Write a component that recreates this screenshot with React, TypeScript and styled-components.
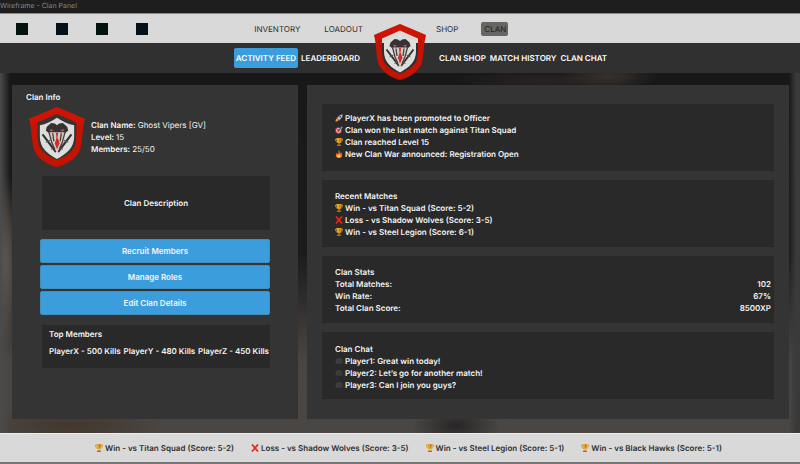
import React from "react";
import styled, { createGlobalStyle } from "styled-components";

const GlobalStyle = createGlobalStyle`
  *, *::before, *::after { box-sizing: border-box; }
  body { margin: 0; background: #1e1e1e; }
  button, a, table { font: inherit; color: inherit; }
  h2, p, ul { margin: 0; padding: 0; font: inherit; }
  ul { list-style: none; }
`;

const Page = styled.div`
  min-height: 100vh;
  display: flex;
  flex-direction: column;
  font-family: Inter, sans-serif;
  font-size: 8px;
  line-height: 12px;
  font-weight: 600;
  text-rendering: geometricPrecision;
  color: #f4f4f4;
`;

const TitleBar = styled.div`
  height: 13px;
  background: #1e1e1e;
  color: #858585;
  font-weight: 400;
  font-size: 7px;
  line-height: 11px;
`;

const Header = styled.header`
  position: relative;
`;

const NavRow = styled.div<{ $tone: "light" | "dark" }>`
  display: grid;
  grid-template-columns: minmax(0, 1fr) 72px minmax(0, 1fr);
  align-items: center;
  height: 30px;
  background: ${(p) => (p.$tone === "light" ? "#d9d9d9" : "#303030")};
  color: ${(p) => (p.$tone === "light" ? "#2b2b2b" : "#fff")};
  font-weight: ${(p) => (p.$tone === "light" ? 400 : 600)};
  border-top: ${(p) => (p.$tone === "light" ? "1px solid #8a8a8a" : "0")};
`;

const StartSide = styled.div<{ $spread?: boolean }>`
  display: flex;
  align-items: center;
  justify-content: ${(p) => (p.$spread ? "space-between" : "flex-end")};
  padding: 0 ${(p) => (p.$spread ? 1 : 4)}px 0 16px;
`;

const EndSide = styled.nav<{ $gap: number; $inset: number }>`
  grid-column: 3;
  display: flex;
  align-items: center;
  gap: ${(p) => p.$gap}px;
  padding-left: ${(p) => p.$inset}px;
`;

const LinkGroup = styled.nav<{ $gap: number }>`
  display: flex;
  align-items: center;
  gap: ${(p) => p.$gap}px;
`;

const SquareGroup = styled.div`
  display: flex;
  gap: 28px;
`;

const Square = styled.button<{ $color: string }>`
  width: 12px;
  height: 12px;
  padding: 0;
  border: 0;
  background: ${(p) => p.$color};
`;

const NavLink = styled.a`
  color: inherit;
  text-decoration: none;
  white-space: nowrap;
`;

const CurrentLink = styled(NavLink)`
  padding: 1px 2px 1px 3px;
  border-radius: 2px;
  background: #666;
  color: #222;
`;

const TabLink = styled(NavLink)<{ $active?: boolean }>`
  padding: ${(p) => (p.$active ? "4px 2px" : "0")};
  border-radius: 2px;
  background: ${(p) => (p.$active ? "#3b9ddb" : "transparent")};
`;

const HeaderCrest = styled.div`
  position: absolute;
  top: 11px;
  left: 50%;
  width: 52px;
  height: 56px;
  margin-left: -26px;
  svg { display: block; width: 100%; height: 100%; }
`;

const Main = styled.main`
  flex: 1;
  display: grid;
  grid-template-columns: minmax(0, 286fr) minmax(0, 482fr);
  gap: 9px;
  padding: 12px 11px 14px 12px;
  background:
    radial-gradient(ellipse 50px 14px at 76% 1%, #37322e, transparent),
    radial-gradient(ellipse 90px 10px at 68% 2%, #2c2222, transparent),
    linear-gradient(90deg, #4b4b4b 0, transparent 10px, transparent 789px, #3a3a3a 796px),
    radial-gradient(ellipse 24px 90px at 0 52%, #79695d, transparent),
    radial-gradient(ellipse 90px 22px at 9% 98%, #42372c, transparent),
    radial-gradient(ellipse 44px 20px at 57% 98%, #272525, transparent),
    linear-gradient(180deg, #181818 0, #1c1b1b 50%, #494542 80%, #494643 100%);
`;

const Panel = styled.section<{ $inset: string }>`
  background: #343434;
  padding: ${(p) => p.$inset};
`;

const Identity = styled.div`
  display: flex;
  align-items: center;
  gap: 6px;
  margin: 4px 0 9px 3px;
  svg { flex: none; width: 56px; height: 60px; }
`;

const Plain = styled.span`
  font-weight: 400;
`;

const Actions = styled.div`
  display: grid;
  gap: 2px;
  margin: 9px 0 10px 14px;
`;

const ActionButton = styled.button`
  height: 24px;
  padding: 0;
  border: 1px solid #438fbc;
  border-radius: 2px;
  background: #3b9ddb;
  color: #f4f4f4;
  text-align: center;
`;

const Description = styled.div`
  display: grid;
  place-items: center;
  min-height: 54px;
  margin-left: 16px;
  background: #292929;
`;

const TopMembers = styled.div`
  min-height: 43px;
  margin-left: 16px;
  padding: 3px 1px 10px 7px;
  background: #292929;
`;

const Kills = styled.ul`
  display: flex;
  justify-content: space-between;
  margin-top: 5px;
  white-space: nowrap;
`;

const Feed = styled.div`
  display: grid;
  gap: 9px;
`;

const Card = styled.div<{ $top?: number }>`
  min-height: 67px;
  padding: ${(p) => p.$top ?? 10}px 3px 8px 13px;
  background: #292929;
`;

const Entry = styled.li`
  display: flex;
  align-items: center;
  gap: 2px;
  white-space: nowrap;
  svg { flex: none; width: 8px; height: 8px; }
`;

const StatsTable = styled.table`
  width: 100%;
  border-collapse: collapse;
  caption { text-align: left; }
  th { padding: 0; text-align: left; font-weight: inherit; }
  td { padding: 0; text-align: right; }
`;

const Footer = styled.footer`
  height: 31px;
  background: #d9d9d9;
  border-top: 1px solid #eee;
  border-bottom: 2px solid #777;
  color: #303030;
`;

const Results = styled.ul`
  display: flex;
  align-items: center;
  gap: 17px;
  height: 100%;
  padding-left: 95px;
`;

type IconKind = "rocket" | "target" | "trophy" | "fire" | "cross" | "bubble";

function Icon({ kind }: { kind: IconKind }) {
  return (
    <svg viewBox="0 0 16 16" aria-hidden="true">
      {kind === "rocket" && (
        <>
          <path d="M1 15c0-4 1-6 4-6l2 2c0 3-2 4-6 4z" fill="#f39b32" />
          <path d="M2 8l4-3 3 1-4 5zM8 14l3-4-1-4-4 5z" fill="#d73b2c" />
          <path d="M15 1c-5 0-9 4-10 8l3 3c4-2 8-6 7-11z" fill="#bdc7cb" />
          <circle cx="10.5" cy="5.5" r="1.8" fill="#31586c" />
        </>
      )}
      {kind === "target" && (
        <>
          <circle cx="7" cy="9" r="6.5" fill="#d7354c" />
          <circle cx="7" cy="9" r="4.5" fill="#f0dfe2" />
          <circle cx="7" cy="9" r="2.8" fill="#d7354c" />
          <path d="M7 9l6-6" stroke="#343d45" strokeWidth="1.6" />
          <path d="M11 3l3-3v2h2l-3 4h-2z" fill="#4d9cba" />
        </>
      )}
      {kind === "trophy" && (
        <>
          <path d="M4 2H1c0 4 1 6 5 7M12 2h3c0 4-1 6-5 7" fill="none" stroke="#d59220" strokeWidth="1.7" />
          <path d="M3 0h10c0 6-1 9-4 10v3H7v-3C4 9 3 6 3 0z" fill="#e7a52c" />
          <path d="M8 1h3c0 4-1 6-3 7z" fill="#bd7317" />
          <path d="M4 13h8v3H4z" fill="#b86d18" />
        </>
      )}
      {kind === "fire" && (
        <>
          <path d="M7 0c5 4 1 5 4 7l1-3c4 6 3 12-4 12C1 16 0 10 4 5c0 3 1 3 2 3 2-3 1-5 1-8z" fill="#f36b22" />
          <path d="M8 7c0 3 4 4 3 6-1 3-6 3-7 0-1-2 1-3 1-4l2 2z" fill="#ffd64c" />
        </>
      )}
      {kind === "cross" && <path d="M2 1l12 14M14 1L2 15" stroke="#ee2418" strokeWidth="3.4" />}
      {kind === "bubble" && (
        <path d="M2 9a6 6 0 0112 0v3H2z" fill="#383838" stroke="#484848" strokeWidth="1.5" />
      )}
    </svg>
  );
}

function Crest({ dark }: { dark?: boolean }) {
  return (
    <svg viewBox="0 0 104 112" role="img" aria-label="Ghost Vipers crest">
      {dark && <path d="M52 9L91 25C91 46 92 63 88 76C84 89 66 98 52 103C38 98 20 89 16 76C12 63 13 46 13 25Z" fill="#333637" />}
      <path
        fillRule="evenodd"
        d="M52 0L104 22C100 35 100 58 96 76C92 94 70 108 52 112C34 108 12 94 8 76C4 58 4 35 0 22ZM52 13L88 29C88 46 89 62 85 73C81 85 66 94 52 99C38 94 23 85 19 73C15 62 16 46 16 29Z"
        fill="#c41203"
      />
      <path d="M0 22L52 0L104 22L100 37L88 28L52 12L16 28L4 37Z" fill="#df1b0a" opacity=".4" />
      <path
        d="M52 20C62 27 73 32 84 34V55C84 76 70 87 52 97C34 87 20 76 20 55V34C31 32 42 27 52 20Z"
        fill="#dddeda"
      />
      <path d="M25 51L50 84M79 51L54 84" stroke="#303438" strokeWidth="4" />
      <path d="M31 66l8-4M73 66l-8-4M41 79l6-3M63 79l-6-3" stroke="#555b5c" strokeWidth="2" />
      <path d="M33 37L41 30L48 31L52 34L56 31L63 30L71 37L73 44L67 49L37 49L31 44Z" fill="#383033" />
      <path d="M37 47H67L62 66L56 78L52 86L48 78L42 66Z" fill="#d3c8c4" />
      <path d="M37 47L42 66L48 79M67 47L62 66L56 79M44 49L46 64M60 49L58 64" fill="none" stroke="#4d3d3e" strokeWidth="2.5" />
      <path d="M50 48H54L53 57L57 67L52 79L48 68L51 58Z" fill="#cf2b2b" />
      <path d="M38 41l8 2-5 3zM66 41l-8 2 5 3z" fill="#a26761" />
    </svg>
  );
}

const squares = ["#03140d", "#03111a", "#03140d", "#03111a"];

const activity: [IconKind, string][] = [
  ["rocket", "PlayerX has been promoted to Officer"],
  ["target", "Clan won the last match against Titan Squad"],
  ["trophy", "Clan reached Level 15"],
  ["fire", "New Clan War announced: Registration Open"],
];

const matches: [IconKind, string][] = [
  ["trophy", "Win - vs Titan Squad (Score: 5-2)"],
  ["cross", "Loss - vs Shadow Wolves (Score: 3-5)"],
  ["trophy", "Win - vs Steel Legion (Score: 6-1)"],
];

const chat: [IconKind, string][] = [
  ["bubble", "Player1: Great win today!"],
  ["bubble", "Player2: Let’s go for another match!"],
  ["bubble", "Player3: Can I join you guys?"],
];

const results: [IconKind, string][] = [
  ["trophy", "Win - vs Titan Squad (Score: 5-2)"],
  ["cross", "Loss - vs Shadow Wolves (Score: 3-5)"],
  ["trophy", "Win - vs Steel Legion (Score: 5-1)"],
  ["trophy", "Win - vs Black Hawks (Score: 5-1)"],
];

const stats = [
  ["Total Matches:", "102"],
  ["Win Rate:", "67%"],
  ["Total Clan Score:", "8500XP"],
];

function Entries({ items }: { items: [IconKind, string][] }) {
  return (
    <>
      {items.map(([kind, text]) => (
        <Entry key={text}>
          <Icon kind={kind} />
          {text}
        </Entry>
      ))}
    </>
  );
}

export default function App() {
  return (
    <Page>
      <GlobalStyle />
      <TitleBar>Wireframe - Clan Panel</TitleBar>
      <Header>
        <NavRow $tone="light">
          <StartSide $spread>
            <SquareGroup>
              {squares.map((color, i) => (
                <Square key={i} $color={color} aria-label={`Shortcut ${i + 1}`} />
              ))}
            </SquareGroup>
            <LinkGroup $gap={24}>
              <NavLink href="#inventory">INVENTORY</NavLink>
              <NavLink href="#loadout">LOADOUT</NavLink>
            </LinkGroup>
          </StartSide>
          <EndSide $gap={23} $inset={0}>
            <NavLink href="#shop">SHOP</NavLink>
            <CurrentLink href="#clan" aria-current="page">CLAN</CurrentLink>
          </EndSide>
        </NavRow>
        <NavRow $tone="dark">
          <StartSide>
            <LinkGroup $gap={3}>
              <TabLink href="#activity" $active>ACTIVITY FEED</TabLink>
              <TabLink href="#leaderboard">LEADERBOARD</TabLink>
            </LinkGroup>
          </StartSide>
          <EndSide $gap={4} $inset={3}>
            <TabLink href="#clan-shop">CLAN SHOP</TabLink>
            <TabLink href="#history">MATCH HISTORY</TabLink>
            <TabLink href="#chat">CLAN CHAT</TabLink>
          </EndSide>
        </NavRow>
        <HeaderCrest>
          <Crest />
        </HeaderCrest>
      </Header>
      <Main>
        <Panel $inset="6px 28px 12px 14px">
          <h2>Clan Info</h2>
          <Identity>
            <Crest dark />
            <div>
              <p>Clan Name: <Plain>Ghost Vipers [GV]</Plain></p>
              <p>Level: <Plain>15</Plain></p>
              <p>Members: <Plain>25/50</Plain></p>
            </div>
          </Identity>
          <Description>Clan Description</Description>
          <Actions>
            <ActionButton>Recruit Members</ActionButton>
            <ActionButton>Manage Roles</ActionButton>
            <ActionButton>Edit Clan Details</ActionButton>
          </Actions>
          <TopMembers>
            <h2>Top Members</h2>
            <Kills>
              <li>PlayerX - 500 Kills</li>
              <li>PlayerY - 480 Kills</li>
              <li>PlayerZ - 450 Kills</li>
            </Kills>
          </TopMembers>
        </Panel>
        <Panel $inset="19px 15px 18px 15px">
          <Feed>
            <Card $top={8}>
              <ul><Entries items={activity} /></ul>
            </Card>
            <Card>
              <h2>Recent Matches</h2>
              <ul><Entries items={matches} /></ul>
            </Card>
            <Card>
              <StatsTable>
                <caption>Clan Stats</caption>
                <tbody>
                  {stats.map(([label, value]) => (
                    <tr key={label}>
                      <th scope="row">{label}</th>
                      <td>{value}</td>
                    </tr>
                  ))}
                </tbody>
              </StatsTable>
            </Card>
            <Card $top={11}>
              <h2>Clan Chat</h2>
              <ul><Entries items={chat} /></ul>
            </Card>
          </Feed>
        </Panel>
      </Main>
      <Footer>
        <Results><Entries items={results} /></Results>
      </Footer>
    </Page>
  );
}
